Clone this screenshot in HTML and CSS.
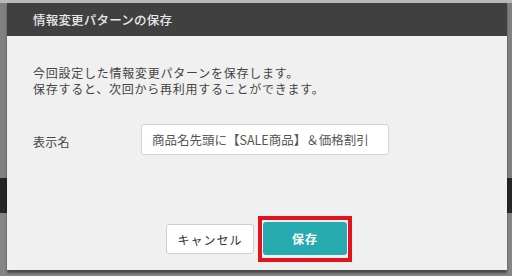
FILE: index.html
```html
<!DOCTYPE html>
<html lang="ja">

<head>
    <meta charset="UTF-8">
    <meta name="viewport" content="width=device-width, initial-scale=1.0">
    <title>情報変更パターンの保存</title>

    <link rel="stylesheet" href="styles.css">
</head>

<body>
    <div class="modal">
        <div class="modalHeader">情報変更パターンの保存</div>
        <div class="modalBody">
            <p class="modalText">今回設定した情報変更パターンを保存します。<br>保存すると、次回から再利用することができます。</p>
            <div class="formRow">
                <label class="formLabel" for="patternName">表示名</label>
                <input id="patternName" class="nameInput" value="商品名先頭に【SALE商品】＆価格割引">
            </div>
        </div>
        <div class="modalFooter">
            <button id="cancel">キャンセル</button>
            <span class="highlight"><button id="save">保存</button></span>
        </div>
    </div>
</body>

</html>
```

FILE: styles.css
```css
body {
    font-family: 'Noto Sans CJK JP', 'Noto Sans', sans-serif;
    margin: 0;
    padding: 0;
    height: 276px;
    overflow: hidden;
    background: linear-gradient(to bottom,
            #b9b9b9 0, #b9b9b9 3px,
            #808080 3px, #808080 178px,
            #262626 178px, #262626 213px,
            #858585 213px);
}

.modal {
    width: 500px;
    height: 267px;
    margin: 3px 0 0 7px;
    background-color: #f0f0f0;
    display: flex;
    flex-direction: column;
    box-shadow: 0 3px 2px rgba(0, 0, 0, 0.45);
}

.modalHeader {
    height: 33px;
    background-color: #404040;
    color: #e8e8e8;
    font-size: 12.5px;
    font-weight: 500;
    line-height: 33px;
    padding-left: 26px;
    letter-spacing: 0.2px;
}

.modalBody {
    padding: 29px 26px 0;
}

.modalText {
    margin: 0;
    font-size: 12px;
    line-height: 16px;
    letter-spacing: 0.75px;
    color: #444;
}

.formRow {
    display: flex;
    align-items: center;
    margin-top: 27px;
}

.formLabel {
    width: 108px;
    font-size: 12px;
    color: #444;
    padding-top: 4px;
    letter-spacing: 0.3px;
}

.nameInput {
    width: 248px;
    height: 31px;
    padding: 0 10px;
    font-family: inherit;
    font-size: 12.5px;
    color: #555;
    background-color: #fff;
    border: 1px solid #d4d4d4;
    border-radius: 3px;
    box-sizing: border-box;
}

.modalFooter {
    margin-top: auto;
    padding: 0 0 8px 4px;
    display: flex;
    justify-content: center;
    align-items: center;
    gap: 4px;
}

#cancel {
    width: 88px;
    height: 30px;
    background-color: #fff;
    color: #333;
    border: 1px solid #cfcfcf;
    border-radius: 3px;
    font-family: inherit;
    font-size: 12px;
    letter-spacing: 1px;
    cursor: pointer;
}

.highlight {
    display: flex;
    padding: 2px 1px 3px;
    border: 4px solid #e3121f;
}

#save {
    width: 84px;
    height: 33px;
    background-color: #27abb1;
    color: #fff;
    border: none;
    border-radius: 3px;
    font-family: inherit;
    font-size: 12px;
    font-weight: bold;
    letter-spacing: 1px;
    cursor: pointer;
}
```
